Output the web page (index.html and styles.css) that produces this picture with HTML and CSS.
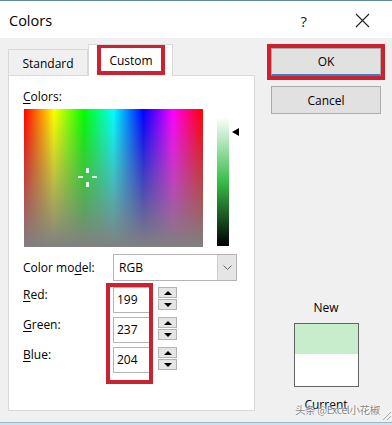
FILE: index.html
```html
<!DOCTYPE html>
<html lang="en">
<head>
    <meta charset="UTF-8">
    <title>Colors</title>
    <link rel="stylesheet" href="styles.css">
</head>
<body>
    <div class="titlebar">
        <span class="title">Colors</span>
        <span class="help">?</span>
        <svg class="close" width="15" height="15" viewBox="0 0 15 15">
            <path d="M1 1 L14 14 M14 1 L1 14" stroke="#222" stroke-width="1.1" fill="none"/>
        </svg>
    </div>

    <div class="main">
        <div class="left">
            <div class="tabs">
                <div class="tab">Standard</div>
                <div class="tab active"><span class="mark">Custom</span></div>
            </div>
            <div class="panel">
                <div class="label"><u>C</u>olors:</div>
                <div class="picker">
                    <div class="spectrum">
                        <span class="cross" style="left: 63px; top: 68px;">
                            <i class="h l"></i><i class="h r"></i><i class="v t"></i><i class="v b"></i>
                        </span>
                    </div>
                    <div class="lum"></div>
                    <div class="arrow" style="margin-top: 19px;"></div>
                </div>
                <div class="model-row">
                    <span class="label name">Color mo<u>d</u>el:</span>
                    <div class="select">
                        <span class="value">RGB</span>
                        <span class="drop">
                            <svg width="9" height="6" viewBox="0 0 9 6"><path d="M0.5 0.5 L4.5 4.5 L8.5 0.5" stroke="#666" fill="none"/></svg>
                        </span>
                    </div>
                </div>
                <div class="values">
                    <div class="names">
                        <div class="label"><u>R</u>ed:</div>
                        <div class="label"><u>G</u>reen:</div>
                        <div class="label"><u>B</u>lue:</div>
                    </div>
                    <div class="inputs">
                        <div class="field">199</div>
                        <div class="field">237</div>
                        <div class="field">204</div>
                    </div>
                    <div class="spins">
                        <div class="spin"><span class="up"><b></b></span><span class="down"><b></b></span></div>
                        <div class="spin"><span class="up"><b></b></span><span class="down"><b></b></span></div>
                        <div class="spin"><span class="up"><b></b></span><span class="down"><b></b></span></div>
                    </div>
                </div>
            </div>
        </div>

        <div class="right">
            <button class="btn ok">OK</button>
            <button class="btn">Cancel</button>
            <div class="preview">
                <div class="cap">New</div>
                <div class="swatch">
                    <div class="new" style="background: rgb(199, 237, 204);"></div>
                    <div class="current"></div>
                </div>
                <div class="cap current-cap">Current</div>
            </div>
        </div>
    </div>

    <div class="watermark">头条 @Excel小花椒</div>
    <svg class="grip" width="12" height="12" viewBox="0 0 12 12">
        <path d="M11 3 L3 11 M11 7 L7 11" stroke="#aaa" stroke-width="1" fill="none"/>
    </svg>
    <div class="taskbar"></div>
</body>
</html>
```

FILE: styles.css
```css
body {
    margin: 0;
    width: 392px;
    height: 425px;
    overflow: hidden;
    position: relative;
    background-color: #f0f0f0;
    font-family: "Open Sans", "Noto Sans", sans-serif;
    font-size: 12px;
    color: #000;
}
u {
    text-decoration: underline;
    text-underline-offset: 2px;
}

/* Title bar */
.titlebar {
    height: 37px;
    border-top: 1px solid #5b8a9c;
    background-color: #fff;
    display: flex;
    align-items: center;
}
.title {
    font-size: 14.5px;
    margin-left: 9px;
    margin-top: 2px;
}
.help {
    font-size: 15px;
    margin-left: auto;
    color: #222;
    margin-top: 2px;
}
.close {
    margin-left: 48px;
    margin-right: 22px;
    margin-top: 2px;
}

/* Main area */
.main {
    display: flex;
    padding: 6px 0 0 8px;
}
.left {
    width: 247px;
}
.tabs {
    display: flex;
    align-items: flex-end;
    height: 31px;
}
.tab {
    box-sizing: border-box;
    height: 26px;
    width: 80px;
    border: 1px solid #d9d9d9;
    border-bottom: none;
    display: flex;
    align-items: center;
    justify-content: center;
    padding-top: 1px;
}
.tab.active {
    height: 32px;
    width: 85px;
    margin-bottom: -1px;
    background-color: #fff;
    position: relative;
    z-index: 1;
    align-items: flex-start;
    justify-content: flex-start;
    padding: 0 0 0 8px;
}
.mark {
    box-sizing: border-box;
    width: 68px;
    height: 30px;
    border: 4px solid #cc2131;
    border-top-width: 3px;
    display: flex;
    align-items: center;
    justify-content: center;
    padding-top: 2px;
}
.panel {
    box-sizing: border-box;
    height: 336px;
    background-color: #fff;
    border: 1px solid #d9d9d9;
    padding: 13px 0 0 14px;
}
.label {
    line-height: 16px;
}

/* Color picker */
.picker {
    display: flex;
    align-items: flex-start;
    margin-top: 4px;
}
.spectrum {
    position: relative;
    width: 179px;
    height: 138px;
    margin-left: 1px;
    background:
        linear-gradient(to bottom, rgba(128, 128, 128, 0), #808080),
        linear-gradient(to right, #f00, #ff0, #0f0, #0ff, #00f, #f0f, #f00);
}
.cross {
    position: absolute;
    width: 0;
    height: 0;
}
.cross i {
    position: absolute;
    background-color: #e4f6e6;
}
.cross .h {
    width: 5px;
    height: 2px;
    top: -1px;
}
.cross .l { left: -9px; }
.cross .r { left: 5px; }
.cross .v {
    width: 3px;
    height: 5px;
    left: -1px;
}
.cross .t { top: -9px; }
.cross .b { top: 5px; }
.lum {
    width: 12px;
    height: 133px;
    margin-left: 14px;
    margin-top: 4px;
    background: linear-gradient(to bottom, #fff 3%, hsl(128, 55%, 48%), #000);
}
.arrow {
    width: 0;
    height: 0;
    margin-left: 3px;
    border-right: 7px solid #000;
    border-top: 4px solid transparent;
    border-bottom: 4px solid transparent;
}

/* Color model */
.model-row {
    display: flex;
    align-items: center;
    margin-top: 7px;
}
.name {
    width: 90px;
}
.select {
    box-sizing: border-box;
    width: 124px;
    height: 27px;
    border: 1px solid #b4b4b4;
    display: flex;
    align-items: center;
}
.select .value {
    margin-left: 5px;
}
.drop {
    margin-left: auto;
    width: 18px;
    height: 100%;
    background-color: #e5e5e5;
    border-left: 1px solid #cfcfcf;
    display: flex;
    align-items: center;
    justify-content: center;
}

/* RGB values */
.values {
    display: flex;
    margin-top: 6px;
}
.names {
    width: 90px;
}
.names .label {
    height: 30px;
}
.inputs {
    position: relative;
    display: flex;
    flex-direction: column;
    gap: 4px;
}
.inputs::after {
    content: "";
    position: absolute;
    left: -7px;
    right: -3px;
    top: -4px;
    bottom: -7px;
    border: 4px solid #cc2131;
}
.field {
    box-sizing: border-box;
    width: 37px;
    height: 26px;
    border: 1px solid #b4b4b4;
    padding-left: 3px;
    line-height: 24px;
}
.spins {
    display: flex;
    flex-direction: column;
    gap: 7px;
    margin-left: 8px;
}
.spin {
    width: 19px;
    height: 23px;
    display: flex;
    flex-direction: column;
    gap: 1px;
}
.spin span {
    box-sizing: border-box;
    flex: 1;
    background-color: #e5e5e5;
    border: 1px solid #b4b4b4;
    display: flex;
    align-items: center;
    justify-content: center;
}
.spin b {
    width: 0;
    height: 0;
    border-left: 4px solid transparent;
    border-right: 4px solid transparent;
}
.up b { border-bottom: 4px solid #000; }
.down b { border-top: 4px solid #000; }

/* Right column */
.right {
    display: flex;
    flex-direction: column;
    width: 110px;
    margin-left: 16px;
    padding-top: 4px;
}
.btn {
    box-sizing: border-box;
    height: 28px;
    font-family: inherit;
    font-size: 12px;
    background-color: #e1e1e1;
    border: 1px solid #adadad;
    color: #000;
    padding: 0;
}
.btn.ok {
    border-bottom: 2px solid #3c7fc2;
    outline: 4px solid #cc2131;
    margin-bottom: 10px;
}
.preview {
    display: flex;
    flex-direction: column;
    align-items: center;
    margin-top: 186px;
}
.cap {
    line-height: 16px;
}
.swatch {
    box-sizing: border-box;
    width: 65px;
    height: 64px;
    margin-top: 7px;
    border: 1px solid #646464;
    display: flex;
    flex-direction: column;
}
.new {
    height: 30px;
}
.current {
    flex: 1;
    background-color: #fff;
}
.current-cap {
    margin-top: 10px;
}

/* Overlays */
.watermark {
    position: absolute;
    left: 295px;
    top: 402px;
    font-family: "Noto Sans CJK SC", sans-serif;
    font-size: 10.5px;
    letter-spacing: -0.4px;
    color: rgba(90, 90, 90, 0.75);
    text-shadow: 0 0 2px #fff, 0 0 2px #fff;
    white-space: nowrap;
}
.grip {
    position: absolute;
    right: 0;
    bottom: 4px;
}
.taskbar {
    position: absolute;
    left: 0;
    bottom: 0;
    width: 100%;
    height: 2px;
    border-top: 1px solid #9db4ca;
    background-color: #d3e1ee;
}
```
